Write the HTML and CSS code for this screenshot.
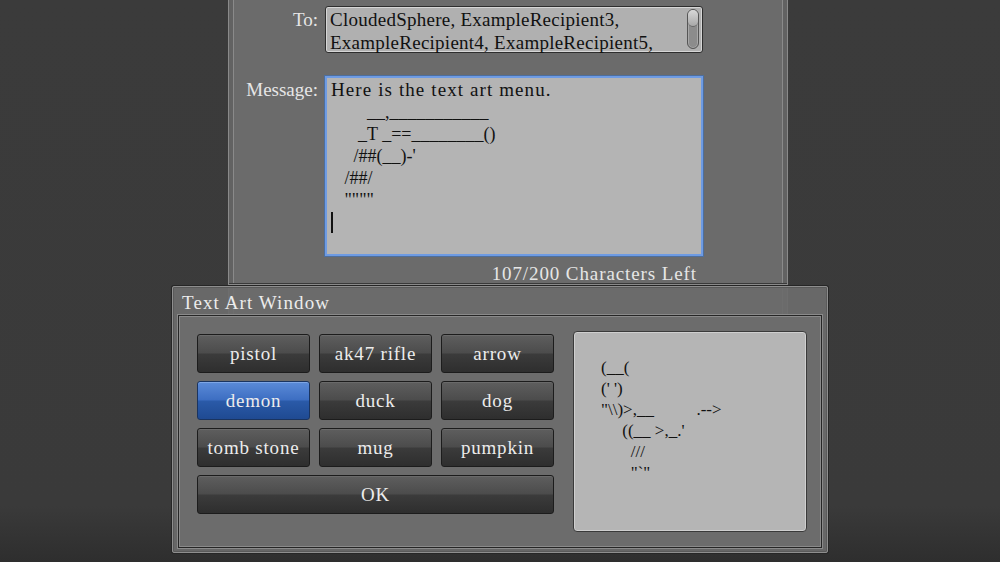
FILE: index.html
```html
<!DOCTYPE html>
<html>
<head>
<meta charset="utf-8">
<link rel="stylesheet" href="styles.css">
</head>
<body>
<div class="stage">
  <div class="panel">
    <div class="compose">
      <div class="label label-to">To:</div>
      <div class="field to-box">
        <div class="to-text">CloudedSphere, ExampleRecipient3,<br>ExampleRecipient4, ExampleRecipient5,</div>
        <div class="scroll"><div class="thumb"></div></div>
      </div>
      <div class="label label-msg">Message:</div>
      <div class="field msg-box">
        <div class="msg-line">Here is the text art menu.</div>
        <div class="art">        __,___________
      _T _==________()
     /##(__)-'
   /##/
   """"</div>
        <div class="caret"></div>
      </div>
      <div></div>
      <div class="counter">107/200 Characters Left</div>
    </div>
    <div class="panel-lower"></div>
  </div>

  <div class="window">
    <div class="win-title">Text Art Window</div>
    <div class="win-body">
      <div class="btn-grid">
        <button class="btn">pistol</button>
        <button class="btn">ak47 rifle</button>
        <button class="btn">arrow</button>
        <button class="btn btn-active">demon</button>
        <button class="btn">duck</button>
        <button class="btn">dog</button>
        <button class="btn">tomb stone</button>
        <button class="btn">mug</button>
        <button class="btn">pumpkin</button>
        <button class="btn btn-ok">OK</button>
      </div>
      <div class="preview"><div class="preview-art">(__(
(' ')
"\\)>,__          .-->
     ((__ >,_.'
       ///
       "`"</div></div>
    </div>
  </div>
</div>
</body>
</html>
```

FILE: styles.css
```css
html, body {
  margin: 0;
  padding: 0;
  background: #3a3a3a;
  font-family: "Liberation Serif", "Times New Roman", serif;
}

.stage {
  position: relative;
  width: 1000px;
  height: 562px;
  overflow: hidden;
  background: linear-gradient(to bottom, #3b3b3b 0%, #3a3a3a 90%, #2e2e2e 100%);
}

.panel {
  margin-left: 228px;
  width: 560px;
  height: 540px;
  box-sizing: border-box;
  background: #6b6b6b;
  border: 1px solid #8a8a8a;
  border-top: none;
  box-shadow: inset 4px 0 0 #626262, inset 5px 0 0 #8a8a8a, inset -4px 0 0 #626262, inset -5px 0 0 #8a8a8a;
  display: flex;
  flex-direction: column;
}

.compose {
  display: grid;
  grid-template-columns: 89px 378px;
  grid-template-rows: auto auto 1fr;
  column-gap: 7px;
  padding-top: 6px;
  height: 284px;
  box-sizing: border-box;
  border-bottom: 1px solid #3a3a3a;
  box-shadow: 0 1px 0 #8a8a8a;
}

.label {
  color: #e6e6e6;
  font-size: 19px;
  text-align: right;
  line-height: 23px;
}
.label-to { padding-top: 2px; }
.label-msg { padding-top: 2px; margin-top: 23px; }

.field {
  box-sizing: border-box;
  color: #111;
  font-size: 19px;
}

.to-box {
  height: 47px;
  background: #b0b0b0;
  border: 1px solid #2e2e2e;
  border-radius: 3px;
  box-shadow: inset 0 0 0 1px #d6d6d6;
  display: flex;
  justify-content: space-between;
  padding: 1px 3px 0 4px;
}
.to-text {
  line-height: 23px;
  white-space: nowrap;
  letter-spacing: 0.25px;
}
.scroll {
  width: 12px;
  height: 40px;
  margin-top: 1px;
  box-sizing: border-box;
  border: 1px solid #555;
  border-radius: 7px;
  background: #8c8c8c;
  box-shadow: inset 0 0 0 1px #a8a8a8;
}
.thumb {
  height: 16px;
  border-radius: 6px;
  background: linear-gradient(#d8d8d8, #a8a8a8);
  border-bottom: 1px solid #666;
}

.msg-box {
  margin-top: 23px;
  height: 180px;
  background: #b4b4b4;
  border: 2px solid #6e9be3;
  box-shadow: 0 0 0 1px #4d6f9e;
  padding: 1px 4px;
  line-height: 22px;
}
.msg-line {
  letter-spacing: 1.1px;
}
.art {
  white-space: pre;
  font-size: 18px;
  line-height: 22px;
}
.caret {
  width: 2px;
  height: 21px;
  background: #111;
  margin-top: 1px;
}

.counter {
  color: #e6e6e6;
  font-size: 19px;
  text-align: right;
  padding-right: 6px;
  margin-top: 7px;
  letter-spacing: 0.9px;
}

.panel-lower {
  flex: 1;
}

/* overlay dialog */
.window {
  position: absolute;
  left: 172px;
  top: 286px;
  width: 656px;
  height: 267px;
  box-sizing: border-box;
  background: rgba(108, 108, 108, 0.93);
  border: 1px solid #8e8e8e;
  box-shadow: 0 0 0 1px #262626, inset 0 0 0 1px #5a5a5a;
  border-radius: 2px;
  display: flex;
  flex-direction: column;
  padding: 0 5px 4px 5px;
}

.win-title {
  color: #ececec;
  font-size: 19px;
  letter-spacing: 1.1px;
  line-height: 20px;
  padding: 6px 0 0 4px;
  height: 22px;
}

.win-body {
  flex: 1;
  box-sizing: border-box;
  background: #6c6c6c;
  border: 1px solid #262626;
  box-shadow: inset 0 0 0 1px #8a8a8a, 0 0 0 1px #8a8a8a;
  display: flex;
  padding: 15px 14px 15px 18px;
  gap: 19px;
}

.btn-grid {
  display: grid;
  grid-template-columns: 113px 113px 113px;
  grid-auto-rows: 39px;
  column-gap: 9px;
  row-gap: 8px;
  padding-top: 3px;
}

.btn {
  font-family: "Liberation Serif", "Times New Roman", serif;
  font-size: 19px;
  color: #ececec;
  letter-spacing: 0.8px;
  border: 1px solid #1c1c1c;
  border-radius: 3px;
  background: linear-gradient(#5e5e5e 0%, #4c4c4c 48%, #3b3b3b 52%, #2e2e2e 100%);
  box-shadow: inset 0 1px 0 #6a6a6a;
  padding: 0;
  margin: 0;
}
.btn-active {
  background: linear-gradient(#5b8bd8 0%, #3d6ec2 48%, #2a5aa8 52%, #1f4a92 100%);
  border-color: #1a3460;
  box-shadow: inset 0 1px 0 #7ea6e6;
}
.btn-ok {
  grid-column: 1 / span 3;
}

.preview {
  width: 235px;
  height: 201px;
  box-sizing: border-box;
  background: #b5b5b5;
  border: 1px solid #3a3a3a;
  border-radius: 4px;
  box-shadow: inset 0 0 0 1px #cfcfcf;
  padding: 25px 0 0 27px;
}
.preview-art {
  white-space: pre;
  font-size: 17px;
  line-height: 21px;
  color: #111;
}
```
